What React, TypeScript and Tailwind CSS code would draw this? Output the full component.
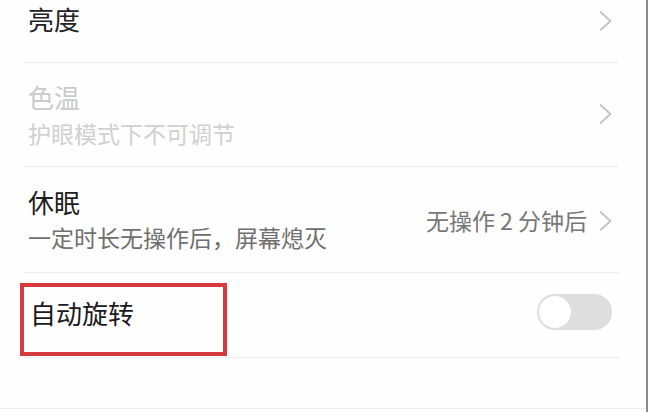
import React from 'react';

const FONT = { fontFamily: '"Noto Sans CJK SC", "Noto Sans", sans-serif' };

const Chevron = () => (
  <svg width="15" height="22" viewBox="0 0 15 22" className="shrink-0">
    <polyline points="2.5,2 12.5,11 2.5,20" fill="none" stroke="#c4c4c4" strokeWidth="1.8" strokeLinecap="round" strokeLinejoin="round" />
  </svg>
);

const App: React.FC = () => {
  return (
    <div className="w-[650px] h-[412px] bg-white overflow-hidden flex" style={FONT}>
      <div className="w-[646px] h-full flex flex-col bg-[#fefefe]">
        {/* 亮度 */}
        <div className="ml-[24px] mr-[27px] h-[63px] border-b border-[#eeeeee] flex items-start justify-between pt-[6px]">
          <span className="pl-[4px] text-[26px] leading-none text-[#222222]">亮度</span>
          <div className="mt-[4px] mr-[6px]"><Chevron /></div>
        </div>

        {/* 色温 (disabled) */}
        <div className="ml-[24px] mr-[27px] h-[104px] border-b border-[#eeeeee] flex items-start justify-between pt-[21px]">
          <div className="pl-[4px] flex flex-col">
            <span className="text-[26px] leading-none text-[#cbcbcb]">色温</span>
            <span className="mt-[12px] text-[23px] leading-none text-[#d0d0d0]">护眼模式下不可调节</span>
          </div>
          <div className="mt-[19px] mr-[6px]"><Chevron /></div>
        </div>

        {/* 休眠 */}
        <div className="ml-[24px] mr-[27px] h-[106px] border-b border-[#eeeeee] flex items-start justify-between pt-[22px]">
          <div className="pl-[4px] flex flex-col">
            <span className="text-[26px] leading-none text-[#1e1e1e]">休眠</span>
            <span className="mt-[11px] text-[23px] leading-none text-[#6f6f6f]">一定时长无操作后，屏幕熄灭</span>
          </div>
          <div className="mt-[20px] mr-[6px] flex items-center gap-[11px]">
            <span className="text-[23px] leading-none text-[#777777]">无操作 2 分钟后</span>
            <Chevron />
          </div>
        </div>

        {/* 自动旋转 */}
        <div className="relative ml-[24px] mr-[27px] h-[85px] border-b border-[#eeeeee] flex items-center justify-between">
          <span className="pl-[6px] text-[26px] leading-none text-[#1a1a1a] -mt-[4px]">自动旋转</span>
          <div className="mr-[7px] -mt-[6px] w-[75px] h-[36px] rounded-full bg-[#dedede] flex items-center pl-[2px]">
            <div className="w-[32px] h-[32px] rounded-full bg-white" />
          </div>
          <div className="absolute left-[-4px] top-[10px] w-[207px] h-[73px] border-[4px] border-[#d63a3c] pointer-events-none" />
        </div>

        <div className="flex-1 border-b border-[#ececec]" />
        <div className="h-[3px]" />
      </div>
      <div className="w-[2px] h-full bg-[#8c8c8c]" />
      <div className="w-[2px] h-full bg-white" />
    </div>
  );
};

export default App;
